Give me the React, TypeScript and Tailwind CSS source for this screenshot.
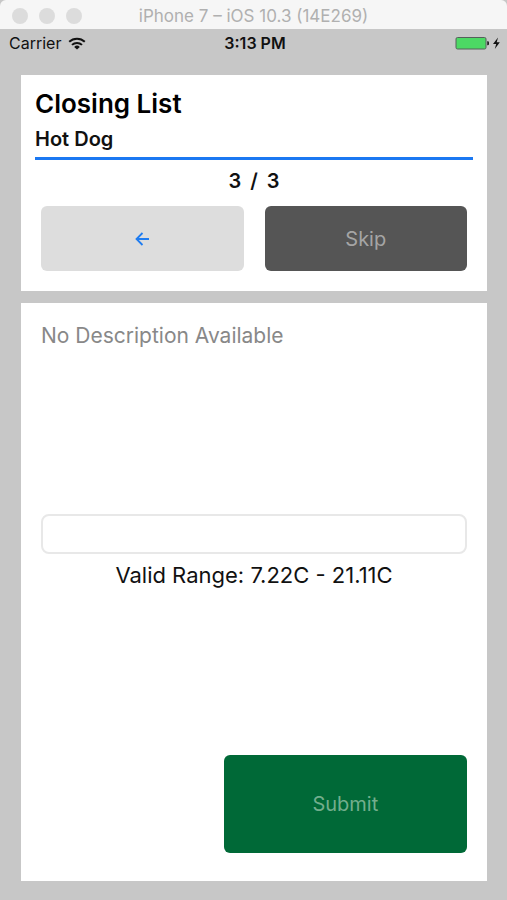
import React from 'react';

interface ChecklistItem {
	list: string;
	name: string;
	description?: string;
	position: number;
	total: number;
	min: number;
	max: number;
}

const item: ChecklistItem = {
	list: 'Closing List',
	name: 'Hot Dog',
	position: 3,
	total: 3,
	min: 7.22,
	max: 21.11,
};

const WindowBar = () => (
	<header className="grid h-[29px] grid-cols-[1fr_auto_1fr] items-center rounded-t-md bg-[#f6f6f6] px-3 pt-[3px]">
		<div className="flex gap-[11px]">
			<span className="h-4 w-4 rounded-full bg-[#dcdcdc]" />
			<span className="h-4 w-4 rounded-full bg-[#dcdcdc]" />
			<span className="h-4 w-4 rounded-full bg-[#dcdcdc]" />
		</div>
		<h1 className="text-[17px] leading-5 text-[#b0b0b0]">
			iPhone 7 – iOS 10.3 (14E269)
		</h1>
	</header>
);

const WifiIcon = () => (
	<svg width="18" height="13" viewBox="0 0 18 13" fill="none" stroke="#111" strokeWidth="2">
		<path d="M1.2 4.8a11.2 11.2 0 0 1 15.6 0" />
		<path d="M4 7.9a7.2 7.2 0 0 1 10 0" />
		<path d="M9 12.6 6.2 9.9a4 4 0 0 1 5.6 0z" fill="#111" stroke="none" />
	</svg>
);

const BatteryIcon = () => (
	<svg width="46" height="14" viewBox="0 0 46 14">
		<rect x="1" y="1.5" width="30" height="11.5" rx="1.5" fill="#4cd964" stroke="#55605a" />
		<path d="M32.2 5.2h.6a1.2 1.2 0 0 1 1.2 1.2v1.7a1.2 1.2 0 0 1-1.2 1.2h-.6z" fill="#222" />
		<path d="M43 1.5 38 8h3.2l-1.4 5 5-6.8h-3.1z" fill="#111" />
	</svg>
);

const StatusBar = () => (
	<div className="grid h-7 grid-cols-[1fr_auto_1fr] items-center pl-[9px] pr-[6px] text-base leading-5 text-[#111]">
		<div className="flex items-center gap-[7px]">
			<span>Carrier</span>
			<WifiIcon />
		</div>
		<span className="font-semibold">3:13 PM</span>
		<div className="flex justify-end">
			<BatteryIcon />
		</div>
	</div>
);

const BackArrow = () => (
	<svg
		width="14"
		height="14"
		viewBox="0 0 14 14"
		fill="none"
		stroke="#1f7cf0"
		strokeWidth="1.8"
	>
		<path d="M14 7H1.5M7.5 1 1.5 7l6 6" />
	</svg>
);

const ItemHeader = ({ item }: { item: ChecklistItem }) => (
	<section className="bg-white px-[14px] pt-[13px] pb-5">
		<h2 className="text-[26px] font-semibold leading-8 text-black">{item.list}</h2>
		<h3 className="mt-[7px] text-xl font-semibold leading-6 text-[#111]">{item.name}</h3>
		<hr className="mt-1.5 border-t-[3px] border-[#1b78f2]" />
		<p className="mt-[9px] flex justify-center gap-[9px] text-xl font-semibold leading-6 text-[#111]">
			<span>{item.position}</span>
			<span>/</span>
			<span>{item.total}</span>
		</p>
		<div className="mt-[13px] grid grid-cols-2 gap-[21px] px-1.5">
			<button
				type="button"
				aria-label="Previous item"
				className="flex h-[65px] items-center justify-center rounded-md bg-[#ddd]"
			>
				<BackArrow />
			</button>
			<button
				type="button"
				className="h-[65px] rounded-md bg-[#555] text-xl text-[#a5a5a5]"
			>
				Skip
			</button>
		</div>
	</section>
);

const TemperatureForm = ({ item }: { item: ChecklistItem }) => (
	<form className="flex flex-1 flex-col justify-between bg-white px-5 pt-[21px] pb-7">
		<p className="text-[21px] leading-6 text-[#888]">
			{item.description ?? 'No Description Available'}
		</p>
		<div>
			<input
				id="temperature"
				type="text"
				className="block h-10 w-full rounded-lg border-2 border-[#e8e8e8] px-3 text-xl"
			/>
			<label
				htmlFor="temperature"
				className="mt-[7px] block text-center text-[22px] leading-7 text-[#111]"
			>
				Valid Range: {item.min}C - {item.max}C
			</label>
		</div>
		<button
			type="button"
			className="h-[98px] w-4/7 self-end rounded-md bg-[#006937] text-xl text-[#73ae8d]"
		>
			Submit
		</button>
	</form>
);

const App = () => {
	return (
		<div className="flex min-h-screen flex-col bg-[#c7c7c7] font-['Inter','Liberation_Sans',sans-serif]">
			<WindowBar />
			<StatusBar />
			<main className="flex flex-1 flex-col gap-3 pl-[21px] pr-5 pt-[18px] pb-[19px]">
				<ItemHeader item={item} />
				<TemperatureForm item={item} />
			</main>
		</div>
	);
};

export default App;
